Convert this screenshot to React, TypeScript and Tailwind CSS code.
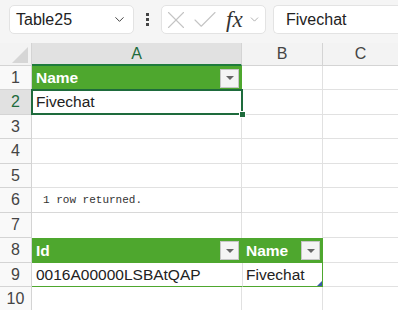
import { ChevronDown, X, Check } from 'lucide-react';

const font = { fontFamily: '"Liberation Sans", Arial, sans-serif' };

function RowHead({ n, h, active }: { n: number; h: string; active?: boolean }) {
  return (
    <div
      className={`${h} w-[32px] shrink-0 flex items-center justify-center border-b border-r border-[#d4d4d4] text-[16px] ${
        active ? 'bg-[#e1e1e1] text-[#1e6b3c]' : 'bg-[#f9f9f9] text-[#444]'
      }`}
    >
      {n}
    </div>
  );
}

function Cell({ w, children, className = '' }: { w: string; children?: React.ReactNode; className?: string }) {
  return <div className={`${w} shrink-0 h-full border-b border-r border-[#e1e1e1] ${className}`}>{children}</div>;
}

function Filter() {
  return (
    <div className="w-[19px] h-[19px] bg-[#f4f4f4] border border-[#c6c6c6] flex items-center justify-center">
      <div className="w-0 h-0 border-l-[4px] border-r-[4px] border-t-[4px] border-l-transparent border-r-transparent border-t-[#666]" />
    </div>
  );
}

function GreenHead({ w, label }: { w: string; label: string }) {
  return (
    <div className={`${w} shrink-0 h-full bg-[#4ea72e] flex items-center justify-between pl-[4px] pr-[2px] border-r border-[#4ea72e]`}>
      <span className="text-white font-bold text-[15.5px]">{label}</span>
      <Filter />
    </div>
  );
}

export default function App() {
  return (
    <div className="w-[398px] h-[310px] overflow-hidden bg-white text-[#222]" style={font}>
      {/* formula bar */}
      <div className="h-[43px] bg-[#f5f5f5] flex items-start pt-[5px] pl-[9px]">
        <div className="w-[125px] shrink-0 h-[29px] bg-white border border-[#e3e3e3] rounded-[5px] flex items-center justify-between pl-[6px] pr-[6px]">
          <span className="text-[16px] text-[#222]">Table25</span>
          <ChevronDown className="w-[15px] h-[15px] text-[#444]" strokeWidth={1.6} />
        </div>
        <div className="w-[27px] shrink-0 h-[29px] flex flex-col items-center justify-center gap-[2px]">
          <div className="w-[3px] h-[3px] bg-[#444]" />
          <div className="w-[3px] h-[3px] bg-[#444]" />
          <div className="w-[3px] h-[3px] bg-[#444]" />
        </div>
        <div className="w-[105px] shrink-0 h-[29px] bg-white border border-[#e3e3e3] rounded-[5px] flex items-center">
          <X className="w-[30px] h-[30px] -ml-[1px] shrink-0 text-[#c4c4c4]" strokeWidth={0.9} />
          <Check className="w-[30px] h-[30px] -ml-[1px] shrink-0 text-[#c4c4c4]" strokeWidth={0.9} />
          <span
            className="ml-[6px] text-[23px] italic text-[#333] leading-none"
            style={{ fontFamily: '"Liberation Serif", "Times New Roman", serif' }}
          >
            fx
          </span>
          <ChevronDown className="w-[13px] h-[13px] ml-[5px] shrink-0 text-[#999]" strokeWidth={1.4} />
        </div>
        <div className="ml-[7px] flex-1 h-[29px] bg-white border border-[#e3e3e3] border-r-0 rounded-l-[5px] flex items-center pl-[12px]">
          <span className="text-[16px] text-[#222]">Fivechat</span>
        </div>
      </div>

      {/* column headers */}
      <div className="flex h-[23px] bg-[#f3f3f3]">
        <div className="w-[32px] shrink-0 border-r border-b border-[#d4d4d4] flex items-end justify-end pr-[3px] pb-[2px]">
          <svg width="16" height="16" viewBox="0 0 16 16">
            <polygon points="16,0 16,16 0,16" fill="#d6d6d6" />
          </svg>
        </div>
        <div className="w-[210px] shrink-0 bg-[#e1e1e1] border-r border-[#d4d4d4] border-b-[2px] border-b-[#1e7b3c] flex items-center justify-center text-[16px] text-[#1e6b3c]">
          A
        </div>
        <div className="w-[81px] shrink-0 border-r border-b border-[#d4d4d4] flex items-center justify-center text-[16px] text-[#444]">
          B
        </div>
        <div className="flex-1 border-b border-[#d4d4d4] flex items-center justify-center text-[16px] text-[#444]">
          C
        </div>
      </div>

      {/* row 1 */}
      <div className="flex h-[24px]">
        <RowHead n={1} h="h-[24px]" />
        <GreenHead w="w-[210px]" label="Name" />
        <Cell w="w-[81px]" />
        <Cell w="flex-1" className="border-r-0" />
      </div>
      {/* row 2 */}
      <div className="flex h-[25px] relative z-10">
        <RowHead n={2} h="h-[25px]" active />
        <div className="w-[210px] shrink-0 h-full relative">
          <div className="absolute left-[-1px] top-[-1px] right-[-1px] bottom-0 border-2 border-[#1e6b3c] flex items-center pl-[3px]">
            <span className="text-[15.5px] text-[#222]">Fivechat</span>
          </div>
          <div className="absolute right-[-4px] bottom-[-3px] w-[7px] h-[7px] bg-[#1e6b3c] border border-white" />
        </div>
        <Cell w="w-[81px]" />
        <Cell w="flex-1" className="border-r-0" />
      </div>
      {[3, 4, 5].map((n, i) => (
        <div key={n} className={`flex ${i === 1 ? 'h-[25px]' : 'h-[24px]'}`}>
          <RowHead n={n} h={i === 1 ? 'h-[25px]' : 'h-[24px]'} />
          <Cell w="w-[210px]" />
          <Cell w="w-[81px]" />
          <Cell w="flex-1" className="border-r-0" />
        </div>
      ))}
      {/* row 6 */}
      <div className="flex h-[25px]">
        <RowHead n={6} h="h-[25px]" />
        <Cell w="w-[210px]" className="flex items-center pl-[11px] border-r-[#d8d8d8] border-b-[#d8d8d8]">
          <span className="text-[11px] text-[#333]" style={{ fontFamily: '"Liberation Mono", "Courier New", monospace' }}>
            1 row returned.
          </span>
        </Cell>
        <Cell w="w-[81px]" />
        <Cell w="flex-1" className="border-r-0" />
      </div>
      {/* row 7 */}
      <div className="flex h-[25px]">
        <RowHead n={7} h="h-[25px]" />
        <Cell w="w-[210px]" className="border-b-0" />
        <Cell w="w-[81px]" className="border-b-0" />
        <Cell w="flex-1" className="border-r-0" />
      </div>
      {/* row 8 */}
      <div className="flex h-[25px]">
        <RowHead n={8} h="h-[25px]" />
        <GreenHead w="w-[210px]" label="Id" />
        <GreenHead w="w-[81px]" label="Name" />
        <Cell w="flex-1" className="border-r-0" />
      </div>
      {/* row 9 */}
      <div className="flex h-[24px]">
        <RowHead n={9} h="h-[24px]" />
        <div className="w-[210px] shrink-0 h-full border-b border-[#4ea72e] flex items-center pl-[4px]">
          <span className="text-[15.5px] text-[#222]">0016A00000LSBAtQAP</span>
        </div>
        <div className="w-[81px] shrink-0 h-full border-b border-r border-[#4ea72e] border-l border-l-[#e1e1e1] flex items-center pl-[3px] relative">
          <span className="text-[15.5px] text-[#222]">Fivechat</span>
          <div className="absolute right-0 bottom-0 w-0 h-0 border-b-[5px] border-l-[5px] border-l-transparent border-b-[#3b5ba8]" />
        </div>
        <Cell w="flex-1" className="border-r-0" />
      </div>
      {/* row 10 */}
      <div className="flex h-[24px]">
        <RowHead n={10} h="h-[24px]" />
        <Cell w="w-[210px]" />
        <Cell w="w-[81px]" />
        <Cell w="flex-1" className="border-r-0" />
      </div>
    </div>
  );
}
